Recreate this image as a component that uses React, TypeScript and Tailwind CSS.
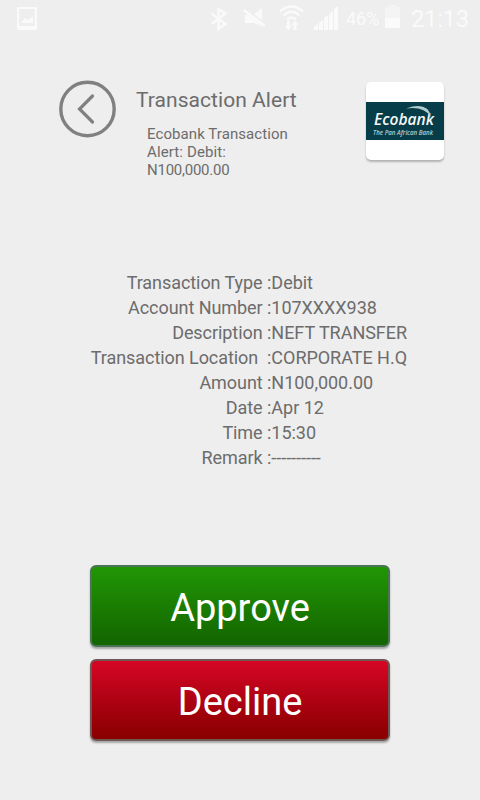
const alertLines = [
  { text: 'Ecobank Transaction', tracking: 'tracking-[0.08px]' },
  { text: 'Alert: Debit:', tracking: 'tracking-[0.12px]' },
  { text: 'N100,000.00', tracking: 'tracking-[-0.24px]' },
];

const details = [
  { label: 'Transaction Type ', value: 'Debit' },
  { label: 'Account Number ', value: '107XXXX938' },
  { label: 'Description ', value: 'NEFT TRANSFER' },
  { label: 'Transaction Location  ', value: 'CORPORATE H.Q' },
  { label: 'Amount ', value: 'N100,000.00' },
  { label: 'Date ', value: 'Apr 12' },
  { label: 'Time ', value: '15:30' },
  { label: 'Remark ', value: '----------' },
];

function StatusBar() {
  return (
    <div className="flex h-[38px] shrink-0 items-start text-[#fafafa]">
      <svg className="ml-[17px] mt-[7px] h-[23px] w-[20px]" viewBox="0 0 20 23" fill="currentColor">
        <path fillRule="evenodd" d="M0 0h20v23H0zM2.200 2v17h15.600V2z" />
        <path d="M4 16l4-5 3 2 5-4v7z" />
      </svg>
      <svg className="ml-[173px] mt-[7px] h-[24px] w-[18px]" viewBox="0 0 18 24" fill="none" stroke="currentColor" strokeWidth="2.400">
        <path d="M1.500 6.500L15.500 17L8.500 22V2L15.500 6.500L1.500 17" />
      </svg>
      <svg className="ml-[15px] mt-[8px] h-[20px] w-[23px]" viewBox="0 0 23 20">
        <path fill="currentColor" d="M2 7h8L19 0v18.500L11 15H2z" />
        <path d="M0 0.500L22 17" stroke="#eeeeee" strokeWidth="4.500" />
        <path d="M0.500 2L22 18" stroke="currentColor" strokeWidth="2.400" />
      </svg>
      <svg className="ml-[13px] mt-[5px] h-[26px] w-[25px]" viewBox="0 0 25 26" fill="none" stroke="currentColor" strokeWidth="2.400">
        <path d="M1 6.500Q12.500-3.500 24 6.500M4.500 10.500Q12.500 3 20.500 10.500M8 14.500Q12.500 10.500 17 14.500" />
        <path fill="currentColor" stroke="none" d="M8 16h3v5h2l-3.500 4.500L6 21h2zM16 15.500l3.500 4.500h-2v5h-3v-5h-2z" />
      </svg>
      <svg className="ml-[10px] mt-[6px] h-[24px] w-[24px]" viewBox="0 0 24 24" fill="currentColor">
        <path d="M0 21l4-3v6H0zM5 17l4-3v10H5zM10 12l4-3v15h-4zM15 8l4-3v19h-4zM20 3l4-3v24h-4z" />
      </svg>
      <span className="ml-[8px] mt-[9px] w-[39px] text-[18px] leading-[20px]">46%</span>
      <svg className="mt-[5px] h-[23px] w-[15px]" viewBox="0 0 15 23" fill="currentColor">
        <path opacity=".45" d="M4 0h7v2h4v11H0V2h4z" />
        <path d="M0 13h15v10H0z" />
      </svg>
      <span className="ml-[11px] mt-[5px] text-[24px] leading-[28px] tracking-[-0.4px]">21:13</span>
    </div>
  );
}

function BankLogo() {
  return (
    <div className="ml-auto mr-[36px] mt-[44px] flex h-[78px] w-[78px] shrink-0 items-center rounded-[5px] bg-white shadow-[0_2px_2px_rgba(0,0,0,0.25)]">
      <svg className="h-[38px] w-[78px]" viewBox="0 0 78 38">
        <rect width="78" height="38" fill="#063d49" />
        <text x="8" y="22.500" fontFamily="'Open Sans', sans-serif" fontSize="17" fontWeight="600" fontStyle="italic" fill="#f3f8f8" textLength="60" lengthAdjust="spacingAndGlyphs">
          Ecobank
        </text>
        <path d="M40 6.500Q62-1 65 15Q58 4 40 6.500z" fill="#b5cdd0" />
        <text x="7" y="33" fontFamily="'Open Sans', sans-serif" fontSize="6.500" fontWeight="600" fontStyle="italic" fill="#b5cdd0" textLength="60" lengthAdjust="spacingAndGlyphs">
          The Pan African Bank
        </text>
      </svg>
    </div>
  );
}

export default function App() {
  return (
    <div className="flex h-[800px] w-[480px] flex-col overflow-hidden bg-[#eeeeee] font-['Roboto',sans-serif] text-[#6c6c6c]">
      <StatusBar />

      <header className="flex h-[232px] shrink-0 items-start">
        <button className="ml-[59px] mt-[42px] h-[58px] w-[58px] shrink-0" aria-label="Back">
          <svg className="h-full w-full" viewBox="0 0 58 58" fill="none" stroke="#808080" strokeLinecap="round">
            <circle cx="28.500" cy="29" r="26.700" strokeWidth="3.400" />
            <path d="M33.500 16L20.500 29L33.500 42" strokeWidth="3.200" />
          </svg>
        </button>
        <div className="ml-[19px] mt-[48px]">
          <h1 className="whitespace-nowrap text-[21px] leading-[28px] tracking-[0.05px]">Transaction Alert</h1>
          <div className="ml-[11px] mt-[11px] text-[15px] leading-[18px]">
            {alertLines.map((line) => (
              <p key={line.text} className={`whitespace-nowrap ${line.tracking}`}>
                {line.text}
              </p>
            ))}
          </div>
        </div>
        <BankLogo />
      </header>

      <div className="h-[295px] shrink-0 text-[18px] leading-[25px]">
        {details.map((row) => (
          <div key={row.label} className="flex whitespace-pre">
            <span className="w-[267px] text-right tracking-[-0.06px]">{row.label}</span>
            <span className="tracking-[-0.03px]">:{row.value}</span>
          </div>
        ))}
      </div>

      <div className="mx-[90px] flex flex-col gap-[12px] text-[38px] leading-none text-white">
        <button className="h-[82px] rounded-[6px] border-2 border-[#4b7355] bg-linear-to-b from-[#219605] to-[#136500] pt-[3px] shadow-[0_2px_2px_rgba(0,0,0,0.3)]">
          Approve
        </button>
        <button className="h-[82px] rounded-[6px] border-2 border-[#6d5854] bg-linear-to-b from-[#d60624] to-[#880000] pt-[3px] shadow-[0_2px_2px_rgba(0,0,0,0.3)]">
          Decline
        </button>
      </div>
    </div>
  );
}
